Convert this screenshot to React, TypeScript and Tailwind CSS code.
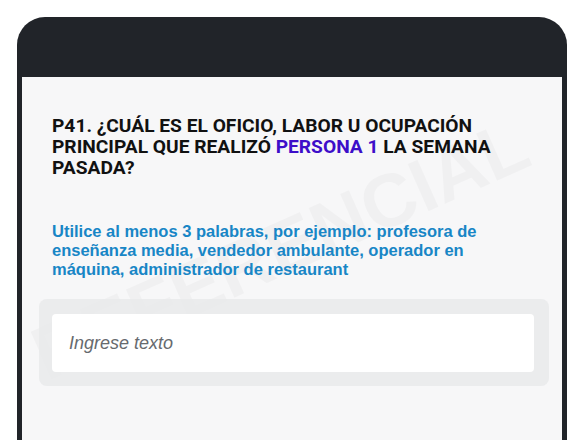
export default function App() {
  return (
    <div className="w-[583px] h-[440px] bg-white overflow-hidden pt-[17px] pl-[17px]">
      <div className="w-[550px] h-[440px] bg-[#212429] rounded-t-[28px] px-[5px] pt-[60px] overflow-hidden">
        <div className="relative h-full bg-[#f7f7f8] pt-[38px] overflow-hidden">
          <div className="pointer-events-none absolute left-[30px] top-[240px] -rotate-[24deg] origin-bottom-left font-['Liberation_Sans'] font-bold text-[75px] leading-none text-black/[0.028] whitespace-nowrap">
            REFERENCIAL
          </div>
          <h1 className="relative px-[30px] font-['Roboto'] font-bold text-[19.2px] leading-[21px] text-[#111]">
            P41. ¿CUÁL ES EL OFICIO, LABOR U OCUPACIÓN PRINCIPAL QUE REALIZÓ{' '}
            <span className="text-[#3d0ec9]">PERSONA 1</span> LA SEMANA PASADA?
          </h1>
          <p className="relative mt-[44px] px-[30px] font-['Liberation_Sans'] font-bold text-[16.5px] leading-[19px] text-[#1886c6]">
            Utilice al menos 3 palabras, por ejemplo: profesora de enseñanza media, vendedor ambulante, operador en máquina, administrador de restaurant
          </p>
          <div className="relative mt-[20px] ml-[17px] mr-[13px] rounded-lg bg-[#e9eaeb]/90 pt-[15px] pb-[14px] pl-[13px] pr-[15px]">
            <div className="h-[58px] rounded bg-white flex items-center px-[17px]">
              <span className="font-['Liberation_Sans'] italic text-[18px] text-[#666a6e]">Ingrese texto</span>
            </div>
          </div>
        </div>
      </div>
    </div>
  );
}
